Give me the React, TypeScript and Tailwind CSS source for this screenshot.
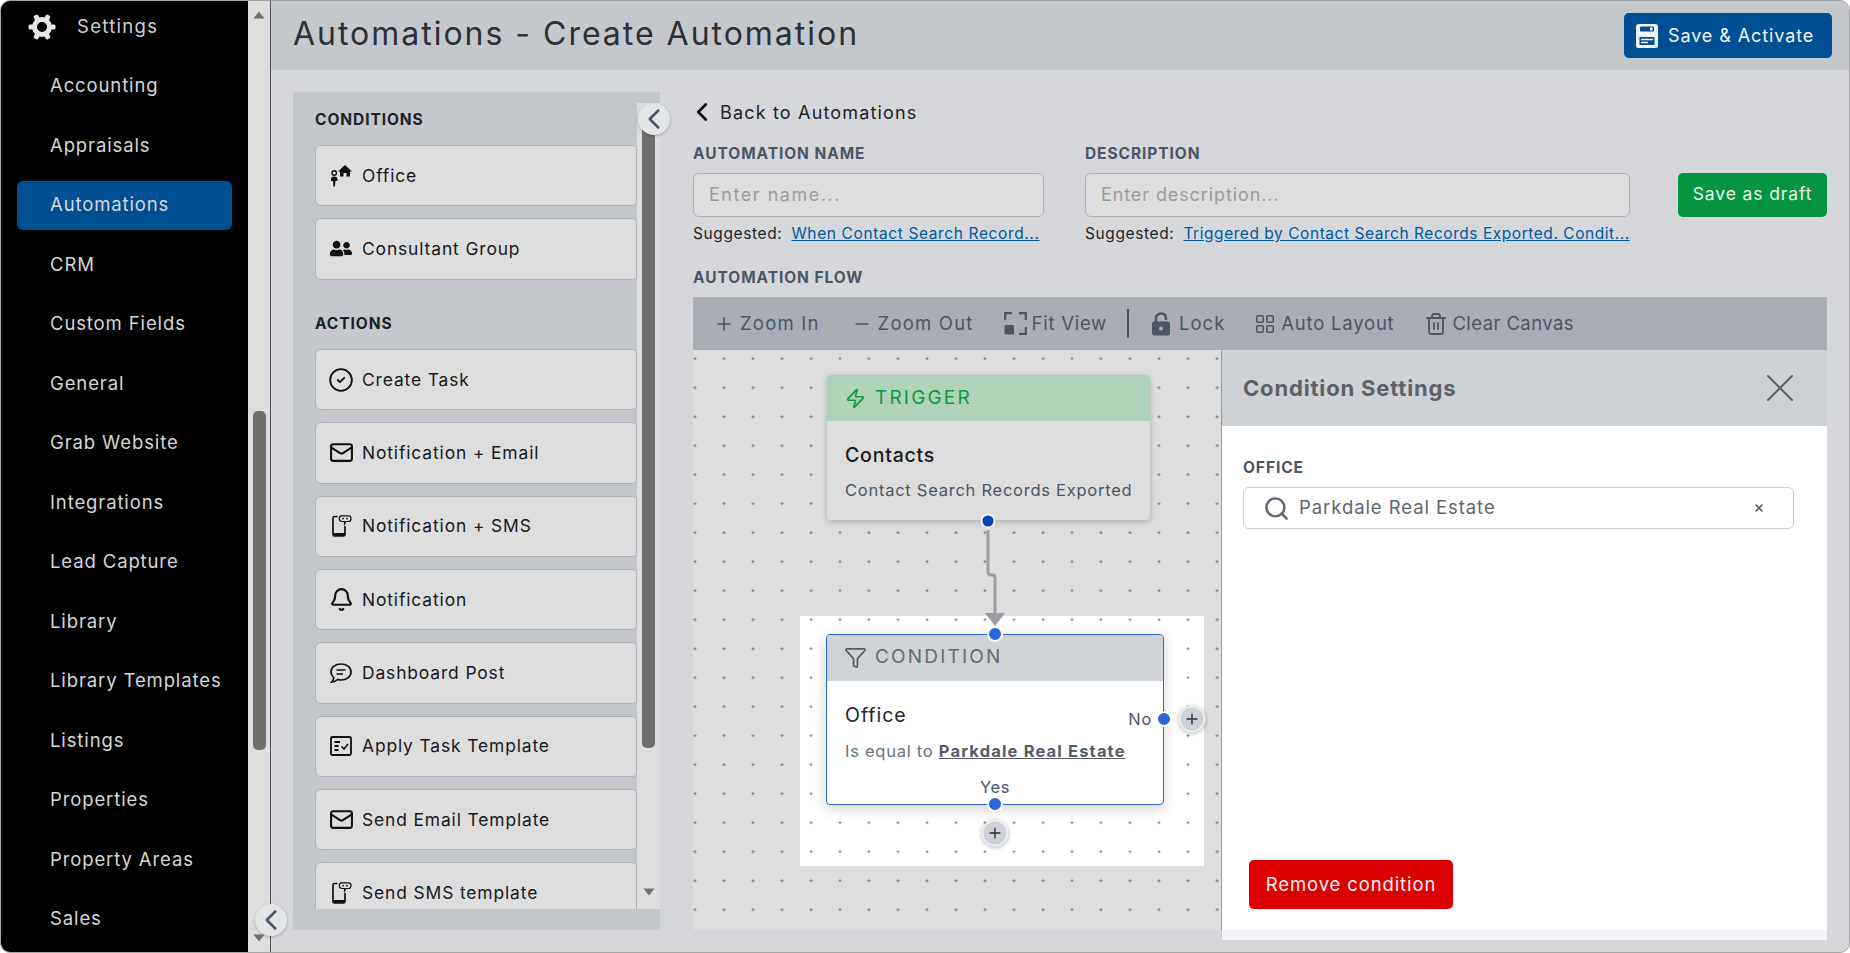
import { Bell, ChevronLeft, CircleCheck, Funnel, LayoutGrid, Mail, Minus, Plus, Search, Trash2, X, Zap } from 'lucide-react';
import { FaUserFriends } from 'react-icons/fa';

const navItems = [
  'Accounting',
  'Appraisals',
  'Automations',
  'CRM',
  'Custom Fields',
  'General',
  'Grab Website',
  'Integrations',
  'Lead Capture',
  'Library',
  'Library Templates',
  'Listings',
  'Properties',
  'Property Areas',
  'Sales',
];

function GearIcon() {
  return (
    <svg width="28" height="28" viewBox="0 0 28 28" className="text-[#e6e6e6]">
      <circle cx="14" cy="14" r="7.5" fill="none" stroke="currentColor" strokeWidth="5" />
      {[0, 60, 120, 180, 240, 300].map((deg) => (
        <rect key={deg} x="22" y="11.5" width="5.5" height="5" rx="1.5" fill="currentColor" transform={`rotate(${deg} 14 14)`} />
      ))}
    </svg>
  );
}

function OfficeIcon() {
  return (
    <svg width="23" height="23" viewBox="0 0 22 22">
      <path d="M8 7 L15 0.5 L22 7 L20 7 L20 12 L16.5 12 L16.5 8.5 L13.5 8.5 L13.5 12 L10 12 L10 7 Z" fill="#111" />
      <circle cx="4.2" cy="8.5" r="2.2" fill="none" stroke="#111" strokeWidth="1.4" />
      <path d="M1 15 Q1 12 4.2 12 Q7.5 12 7.5 15 L7.5 16.5 L5.5 16.5 L5 22 L3.4 22 L3 16.5 L1 16.5 Z" fill="#111" />
    </svg>
  );
}

function PhoneChatIcon() {
  return (
    <svg width="22" height="22" viewBox="0 0 22 22" fill="none" stroke="#111" strokeWidth="1.7">
      <path d="M7.5 1.5 H4.5 Q3 1.5 3 3 V19.5 Q3 21 4.5 21 H13.5 Q15 21 15 19.5 V11" />
      <path d="M3 18 H15 V21 H3 Z" fill="#111" stroke="none" />
      <path d="M10 0.8 H18.5 Q21 0.8 21 3.5 Q21 6.5 18.5 6.5 H16 L14.5 9 V6.5 H12 Q9.3 6.5 9.3 3.5 Q9.3 0.8 11.5 0.8 Z" strokeWidth="1.2" />
      <circle cx="13" cy="3.6" r="0.9" fill="#111" stroke="none" />
      <circle cx="17" cy="3.6" r="0.9" fill="#111" stroke="none" />
    </svg>
  );
}

function ChatIcon() {
  return (
    <svg width="22" height="22" viewBox="0 0 22 22" fill="none" stroke="#111" strokeWidth="1.7">
      <path d="M11 2 C16.5 2 21 5.2 21 10 C21 14.8 16.5 18 11 18 C9.8 18 8.6 17.8 7.5 17.5 C6 19 3.8 20.2 1.5 20.2 C2.8 19 3.6 17.6 3.7 15.6 C2 14.2 1 12.2 1 10 C1 5.2 5.5 2 11 2 Z" />
      <path d="M6.5 8 H15.5 M6.5 12 H13" />
    </svg>
  );
}

function TaskTemplateIcon() {
  return (
    <svg width="22" height="22" viewBox="0 0 22 22" fill="none" stroke="#111">
      <rect x="1" y="2" width="20" height="18" rx="1.5" strokeWidth="1.8" />
      <path d="M4.5 7 H10 M4.5 11 H8.5 M4.5 15 H8.5" strokeWidth="1.8" />
      <path d="M11.5 11.5 L14 14 L18 9" strokeWidth="1.6" />
    </svg>
  );
}

function FloppyIcon() {
  return (
    <svg width="24" height="26" viewBox="0 0 24 26" className="shrink-0">
      <path d="M4 1 H20 Q23 1 23 4 V23 Q23 25 21 25 H3 Q1 25 1 23 V4 Q1 1 4 1 Z" fill="#eef1f6" />
      <rect x="5" y="3.5" width="14" height="5" rx="1" fill="#004f93" />
      <rect x="15" y="4.5" width="2.5" height="3" fill="#eef1f6" />
      <rect x="4.5" y="14" width="15" height="8" rx="0.5" fill="#004f93" />
      <path d="M6 16.5 H18 M6 19.5 H13" stroke="#eef1f6" strokeWidth="1.3" />
    </svg>
  );
}

function FitViewIcon() {
  return (
    <svg width="23" height="23" viewBox="0 0 23 23" fill="none" stroke="#4b5563" strokeWidth="2.2" className="shrink-0">
      <path d="M1.2 8 V1.2 H8 M15 1.2 H21.8 V8 M21.8 15 V21.8 H15" />
      <rect x="0.5" y="13" width="9.5" height="9.5" rx="1" fill="#4b5563" stroke="none" />
    </svg>
  );
}

function LockIcon() {
  return (
    <svg width="20" height="24" viewBox="0 0 20 24" className="shrink-0">
      <path d="M5 11 V6.5 C5 3.5 7 1.5 10 1.5 C13 1.5 15 3.5 15 6.5 V8" fill="none" stroke="#4b5563" strokeWidth="2.4" />
      <rect x="1" y="9.5" width="18" height="14" rx="2" fill="#4b5563" />
      <circle cx="10" cy="16.5" r="2" fill="#aaadb5" />
    </svg>
  );
}

function Triangle({ down = false }: { down?: boolean }) {
  return (
    <svg width="12" height="8" viewBox="0 0 12 8" className="fill-[#6f6f6f]">
      <path d={down ? 'M0.5 0.5 H11.5 L6 7.5 Z' : 'M0.5 7.5 H11.5 L6 0.5 Z'} />
    </svg>
  );
}

function PaletteCard({ icon, label }: { icon: React.ReactNode; label: string }) {
  return (
    <div className="mb-[12px] flex h-[61.33px] shrink-0 items-center gap-[10px] rounded-l-[6px] rounded-r-[4px] border border-[#aeb2bb] bg-[#dedede] pl-[14px] text-[17.4px] text-[#16181e]">
      <span className="flex h-[22px] w-[22px] shrink-0 items-center justify-center">{icon}</span>
      {label}
    </div>
  );
}

function ToolItem({ icon, label, className }: { icon: React.ReactNode; label: string; className: string }) {
  return (
    <div className={`flex items-center text-[18.5px] text-[#4b5563] ${className}`}>
      {icon}
      {label}
    </div>
  );
}

function Handle({ className }: { className: string }) {
  return <span className={`absolute h-[16px] w-[16px] -translate-x-1/2 -translate-y-1/2 rounded-full border-2 border-white bg-[#2b66d9] ${className}`} />;
}

function AddButton({ className }: { className: string }) {
  return (
    <span className={`absolute flex h-[27px] w-[27px] -translate-x-1/2 -translate-y-1/2 items-center justify-center rounded-full border-2 border-[#eef0f3] bg-[#ced1da] text-[#24272e] shadow-[0_1px_4px_rgba(0,0,0,0.3)] ${className}`}>
      <Plus size={17} strokeWidth={1.8} />
    </span>
  );
}

function FieldLabel({ children, className = '' }: { children: React.ReactNode; className?: string }) {
  return <label className={`block h-[20px] text-[15.5px] font-bold leading-[22px] tracking-[0.06em] text-[#4b5563] ${className}`}>{children}</label>;
}

export default function App() {
  return (
    <div className="relative box-border flex h-[953px] w-[1850px] overflow-hidden rounded-[10px] border border-[#a5a5a5] bg-[#d5d7db] font-['Inter',sans-serif] tracking-[0.055em]">
      {/* Main navigation */}
      <aside className="w-[247px] shrink-0 overflow-hidden bg-black text-[18.5px] text-[#d6d6d6]">
        <div className="flex h-[50px] items-center pl-[27px] pt-[2px]">
          <GearIcon />
          <span className="ml-[21px] tracking-[0.07em] text-[#cfcfcf]">Settings</span>
        </div>
        <nav className="mt-[10.5px]">
          {navItems.map((item) => (
            <div
              key={item}
              className={`mx-[16px] mb-[10.5px] flex h-[49px] items-center rounded-[6px] pl-[33px] ${item === 'Automations' ? 'bg-[#004f93]' : ''}`}
            >
              {item}
            </div>
          ))}
        </nav>
      </aside>
      {/* Nav scrollbar */}
      <div className="flex w-[23px] shrink-0 flex-col items-center border-r border-[#4b5563] bg-[#dedede]">
        <div className="mt-[10px] h-[8px]"><Triangle /></div>
        <div className="mt-[392px] h-[339px] w-[13px] rounded-[5px] bg-[#6e6e6e]" />
        <div className="mt-[184px] h-[8px]"><Triangle down /></div>
      </div>
      <span className="absolute left-[254px] top-[903px] flex h-[32px] w-[32px] items-center justify-center rounded-full bg-[#e4e5e7] text-[#4b5563] shadow-[0_1px_3px_rgba(0,0,0,0.25)]">
        <ChevronLeft size={34} strokeWidth={1.8} className="shrink-0" />
      </span>

      <main className="flex min-w-0 flex-1 flex-col">
        <header className="flex h-[69px] shrink-0 items-center justify-between bg-[#c4c7cc] pl-[22px] pr-[17px]">
          <h1 className="pb-[3px] text-[32px] font-normal tracking-[0.062em] text-[#2c2f36]">Automations - Create Automation</h1>
          <button className="flex h-[45px] w-[208px] items-center gap-[9px] rounded-[5px] bg-[#004f93] pl-[11px] text-[18px] tracking-[0.05em] text-[#f2f4f7]">
            <FloppyIcon />
            Save &amp; Activate
          </button>
        </header>

        <div className="flex flex-1 pl-[22px] pt-[22px]">
          {/* Block palette */}
          <section className="relative h-[838px] w-[367px] shrink-0 bg-[#c4c7cc] pt-[11px]">
            <div className="flex h-[806px]">
              <div className="flex w-[344px] flex-col overflow-hidden pl-[22px] pt-[6px]">
                <h2 className="mb-[16px] h-[20px] shrink-0 text-[15.5px] font-bold leading-[22px] tracking-[0.06em] text-[#1d2029]">CONDITIONS</h2>
                <PaletteCard icon={<OfficeIcon />} label="Office" />
                <PaletteCard icon={<FaUserFriends size={23} color="#111" />} label="Consultant Group" />
                <h2 className="mb-[16px] mt-[21.33px] h-[20px] shrink-0 text-[15.5px] font-bold leading-[22px] tracking-[0.06em] text-[#1d2029]">ACTIONS</h2>
                <PaletteCard icon={<CircleCheck size={26} color="#111" strokeWidth={1.7} className="shrink-0" />} label="Create Task" />
                <PaletteCard icon={<Mail size={25} color="#111" strokeWidth={2} className="shrink-0" />} label="Notification + Email" />
                <PaletteCard icon={<PhoneChatIcon />} label="Notification + SMS" />
                <PaletteCard icon={<Bell size={25} color="#111" strokeWidth={2} className="shrink-0" />} label="Notification" />
                <PaletteCard icon={<ChatIcon />} label="Dashboard Post" />
                <PaletteCard icon={<TaskTemplateIcon />} label="Apply Task Template" />
                <PaletteCard icon={<Mail size={25} color="#111" strokeWidth={2} className="shrink-0" />} label="Send Email Template" />
                <PaletteCard icon={<PhoneChatIcon />} label="Send SMS template" />
              </div>
              <div className="flex w-[23px] flex-col items-center bg-[#dedede]">
                <div className="mt-[15px] h-[630px] w-[13px] rounded-b-[5px] bg-[#6e6e6e]" />
                <div className="mt-[140px]"><Triangle down /></div>
              </div>
            </div>
            <span className="absolute left-[345px] top-[11px] flex h-[32px] w-[32px] items-center justify-center rounded-full bg-[#e4e5e7] text-[#4b5563] shadow-[0_1px_3px_rgba(0,0,0,0.25)]">
              <ChevronLeft size={34} strokeWidth={1.8} className="shrink-0" />
            </span>
          </section>

          <section className="ml-[33px] w-[1134px] shrink-0">
            <div className="flex h-[40px] items-center text-[18px] tracking-[0.065em] text-[#1c1f26]">
              <ChevronLeft size={30} color="#111" strokeWidth={2.2} className="ml-[-6px] shrink-0" />
              <span className="ml-[3px]">Back to Automations</span>
            </div>

            <div className="mt-[11px] flex">
              <div className="w-[351px]">
                <FieldLabel>AUTOMATION NAME</FieldLabel>
                <div className="mt-[10px] flex h-[44px] items-center rounded-[6px] border border-[#aeb0b5] bg-[#dedede] pb-[2px] pl-[15px] text-[18px] tracking-[0.085em] text-[#9b9b9b]">Enter name...</div>
                <div className="mt-[6px] flex h-[20px] items-center pt-[1px] text-[15.5px] tracking-[0.04em] text-[#1c1f26]">
                  <span className="shrink-0">Suggested:</span>
                  <a className="ml-[9px] whitespace-nowrap text-[#00589f] underline">When Contact Search Record...</a>
                </div>
              </div>
              <div className="ml-[41px] w-[545px]">
                <FieldLabel>DESCRIPTION</FieldLabel>
                <div className="mt-[10px] flex h-[44px] items-center rounded-[6px] border border-[#aeb0b5] bg-[#dedede] pb-[2px] pl-[15px] text-[18px] tracking-[0.05em] text-[#9b9b9b]">Enter description...</div>
                <div className="mt-[6px] flex h-[20px] items-center pt-[1px] text-[15.5px] tracking-[0.04em] text-[#1c1f26]">
                  <span className="shrink-0">Suggested:</span>
                  <a className="ml-[9px] whitespace-nowrap tracking-[0.035em] text-[#00589f] underline">Triggered by Contact Search Records Exported. Condit...</a>
                </div>
              </div>
              <button className="ml-[48px] mt-[30px] h-[44px] w-[149px] rounded-[5px] bg-[#05943f] pb-[2px] text-[17.5px] tracking-[0.05em] text-[#eef5f0]">Save as draft</button>
            </div>

            <FieldLabel className="mt-[24px]">AUTOMATION FLOW</FieldLabel>

            <div className="mt-[10px] flex h-[53px] items-center bg-[#aaadb5]">
              <ToolItem className="ml-[21px] gap-[6px] tracking-[0.065em]" icon={<Plus size={20} strokeWidth={2} className="shrink-0" />} label="Zoom In" />
              <ToolItem className="ml-[32px] gap-[6px] tracking-[0.065em]" icon={<Minus size={20} strokeWidth={2} className="shrink-0" />} label="Zoom Out" />
              <ToolItem className="ml-[30px] gap-[5px] tracking-[0.04em]" icon={<FitViewIcon />} label="Fit View" />
              <span className="ml-[20px] h-[29px] w-[2px] bg-[#4b5563]" />
              <ToolItem className="ml-[22px] gap-[8px] tracking-[0.055em]" icon={<LockIcon />} label="Lock" />
              <ToolItem className="ml-[29px] gap-[5px] tracking-[0.042em]" icon={<LayoutGrid size={22} strokeWidth={1.7} className="shrink-0" />} label="Auto Layout" />
              <ToolItem className="ml-[30px] gap-[4px] tracking-[0.022em]" icon={<Trash2 size={24} strokeWidth={1.8} className="shrink-0" />} label="Clear Canvas" />
            </div>

            <div className="flex items-start">
              {/* Flow canvas */}
              <div className="relative h-[580px] w-[529px] shrink-0 overflow-hidden border-r border-[#9b9b9b] bg-[#dedede] bg-[radial-gradient(#7f7f7f_1px,transparent_1.1px)] bg-[size:29px_29px] bg-[position:-12.5px_-5.8px]">
                <div className="absolute left-[107px] top-[266px] h-[250px] w-[404px] bg-white bg-[radial-gradient(#8a8a8a_1px,transparent_1.1px)] bg-[size:29px_29px] bg-[position:-3.5px_-10.8px]" />

                <div className="absolute left-[134px] top-[25px] h-[145px] w-[323px] overflow-hidden rounded-[4px] bg-[#dedede] shadow-[0_2px_6px_rgba(0,0,0,0.22)]">
                  <div className="flex h-[46px] items-center gap-[9px] bg-[#b0d2b8] pl-[18px] text-[19px] tracking-[0.115em] text-[#0b9a41]">
                    <Zap size={21} strokeWidth={1.9} className="shrink-0" />
                    TRIGGER
                  </div>
                  <div className="mt-[23px] pl-[18px] text-[19.5px] font-medium leading-[22px] tracking-[0.04em] text-[#17191f]">Contacts</div>
                  <div className="mt-[13px] pl-[18px] text-[16.5px] leading-[22px] tracking-[0.045em] text-[#4b5563]">Contact Search Records Exported</div>
                </div>
                <span className="absolute left-[295px] top-[171px] h-[15px] w-[15px] -translate-x-1/2 -translate-y-1/2 rounded-full border-2 border-[#eef0f3] bg-[#0b45b5]" />

                <svg className="absolute left-0 top-0" width="529" height="300" fill="none">
                  <path d="M295 180 V222 Q295 225 298 225 H299 Q302 225 302 228 V265" stroke="#9a9ca3" strokeWidth="3" />
                  <path d="M292 263 H312 L302 276 Z" fill="#9a9ca3" />
                </svg>

                <div className="absolute left-[133px] top-[284px] h-[171px] w-[338px] rounded-[4px] border border-[#2f68d8] bg-white shadow-[0_4px_14px_rgba(0,0,0,0.18)]">
                  <div className="flex h-[46px] items-center gap-[8px] rounded-t-[3px] bg-[#cfd2d7] pb-[1px] pl-[17px] text-[19px] tracking-[0.115em] text-[#666a72]">
                    <Funnel size={23} strokeWidth={1.8} color="#55595f" className="shrink-0" />
                    CONDITION
                  </div>
                  <div className="mt-[23px] pl-[18px] text-[19.5px] leading-[22px] tracking-[0.05em] text-[#22252c]">Office</div>
                  <div className="mt-[14px] pl-[18px] text-[16.5px] leading-[22px] tracking-[0.045em] text-[#6b7280]">
                    Is equal to <span className="font-bold tracking-[0.07em] text-[#565b66] underline">Parkdale Real Estate</span>
                  </div>
                  <span className="absolute left-0 top-[142px] w-full text-center text-[16.5px] leading-[20px] tracking-[0.04em] text-[#4b5563]">Yes</span>
                  <span className="absolute right-[11px] top-[74px] text-[16.5px] leading-[20px] tracking-[0.04em] text-[#4b5563]">No</span>
                </div>
                <Handle className="left-[302px] top-[284px]" />
                <Handle className="left-[302px] top-[454px]" />
                <Handle className="left-[471px] top-[369px]" />
                <AddButton className="left-[499px] top-[369px]" />
                <AddButton className="left-[302px] top-[483px]" />
              </div>

              {/* Condition settings */}
              <div className="flex h-[590px] w-[605px] shrink-0 flex-col">
                <div className="flex h-[76px] shrink-0 items-center justify-between bg-[#ced1d6] pl-[21px] pr-[23px]">
                  <h3 className="text-[22px] font-bold tracking-[0.038em] text-[#5c6068]">Condition Settings</h3>
                  <X size={48} strokeWidth={1} color="#5c6068" className="shrink-0" />
                </div>
                <div className="flex flex-1 flex-col bg-white pt-[31px]">
                  <FieldLabel className="ml-[21px]">OFFICE</FieldLabel>
                  <div className="ml-[21px] mt-[10px] flex h-[42px] w-[551px] items-center rounded-[6px] border border-[#c9ccd1] pl-[19px] pr-[28px] text-[18.5px] tracking-[0.05em] text-[#5f6570]">
                    <Search size={27} strokeWidth={2.2} color="#5f6873" className="shrink-0" />
                    <span className="ml-[9px] flex-1">Parkdale Real Estate</span>
                    <X size={12} strokeWidth={3} color="#4b5563" className="shrink-0" />
                  </div>
                  <button className="mb-[21px] ml-[27px] mt-auto h-[49px] w-[204px] rounded-[5px] bg-[#dc0000] text-[18.5px] text-[#fff4f4]">Remove condition</button>
                </div>
                <div className="h-[10px] shrink-0 bg-[#f3f5f9]" />
              </div>
            </div>
          </section>
        </div>
      </main>
    </div>
  );
}
